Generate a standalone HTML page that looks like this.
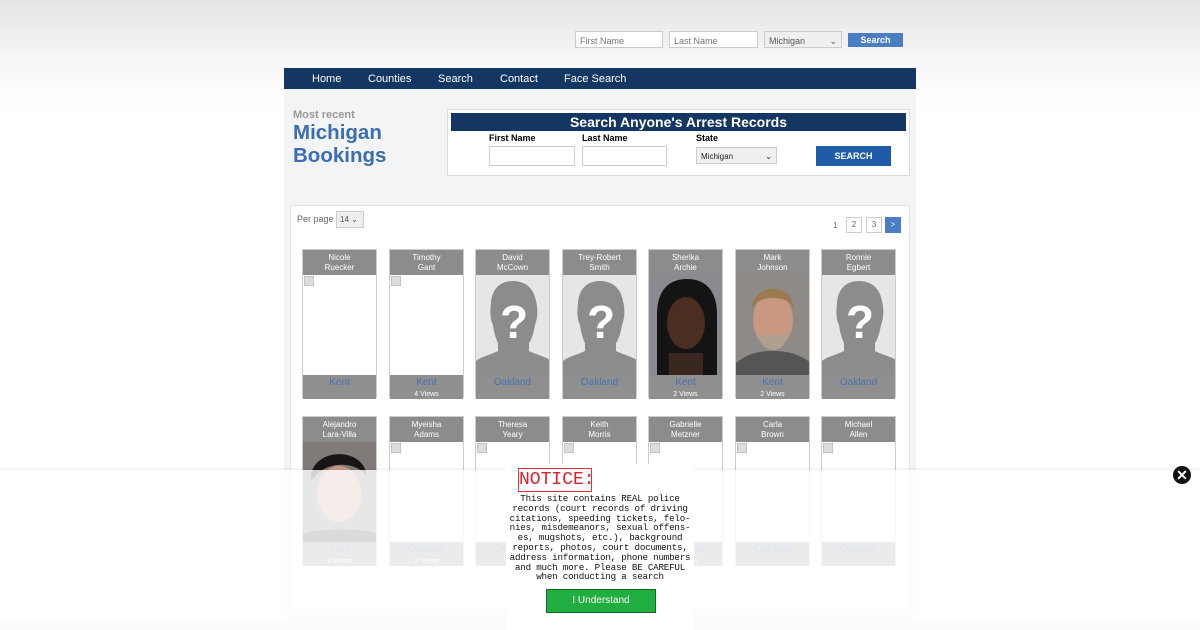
<!DOCTYPE html>
<html><head><meta charset="utf-8">
<style>
*{box-sizing:border-box;margin:0;padding:0}
body{width:1200px;height:620px;overflow:hidden;font-family:"Liberation Sans",sans-serif;background:linear-gradient(#e4e4e4 0,#f7f7f7 60px,#fff 110px);position:relative}
.abs{position:absolute}
.inp{position:absolute;border:1px solid #ccc;background:#fff;font-size:9px;color:#777;padding:4px}
.nav{left:284px;top:68px;width:632px;height:21px;background:#133762;color:#fff;font-size:11px}
.nav span{position:absolute;top:5px}
.main{left:284px;top:89px;width:632px;height:531px;background:#f3f4f6}
.card{position:absolute;width:75px;height:149px;background:#fff;border:1px solid #ccc}
.card .h{height:25px;background:#8c8c8c;color:#fff;font-size:8px;text-align:center;line-height:9.5px;padding-top:3px}
.card .im{height:100px;position:relative;overflow:hidden}
.card .f{height:24px;background:#8f8f8f;text-align:center;color:#4a72b0;font-size:10px;padding-top:2px;line-height:11px}
.card .f small{display:block;color:#fff;font-size:7px;margin-top:1px}
.pg{position:absolute;width:16px;height:16px;border:1px solid #ccc;background:#fff;font-size:8px;color:#666;text-align:center;line-height:14px}
</style></head><body>
<div class="inp" style="left:575px;top:31px;width:88px;height:17px">First Name</div>
<div class="inp" style="left:669px;top:31px;width:89px;height:17px">Last Name</div>
<div class="inp" style="left:764px;top:31px;width:78px;height:17px;background:#efefef;color:#555">Michigan<span style="float:right">⌄</span></div>
<div class="abs" style="left:848px;top:33px;width:55px;height:14px;background:#4a7ec2;color:#fff;font-size:9px;font-weight:bold;text-align:center;line-height:14px">Search</div>

<div class="abs nav"><span style="left:28px">Home</span><span style="left:84px">Counties</span><span style="left:154px">Search</span><span style="left:216px">Contact</span><span style="left:280px">Face Search</span></div>
<div class="abs main"></div>
<div class="abs" style="left:293px;top:109px;font-size:11px;color:#999;font-weight:bold">Most recent</div>
<div class="abs" style="left:293px;top:121px;font-size:20.5px;color:#3b6db3;font-weight:bold;line-height:23px">Michigan<br>Bookings</div>
<div class="abs" style="left:447px;top:109px;width:463px;height:67px;background:#fff;border:1px solid #ddd"></div>
<div class="abs" style="left:451px;top:113px;width:455px;height:18px;background:#133762;color:#fff;font-size:14px;font-weight:bold;text-align:center;line-height:18px">Search Anyone's Arrest Records</div>
<div class="abs" style="left:489px;top:133px;font-size:9px;font-weight:bold">First Name</div>
<div class="abs" style="left:582px;top:133px;font-size:9px;font-weight:bold">Last Name</div>
<div class="abs" style="left:696px;top:133px;font-size:9px;font-weight:bold">State</div>
<div class="inp" style="left:489px;top:146px;width:86px;height:20px"></div>
<div class="inp" style="left:582px;top:146px;width:85px;height:20px"></div>
<div class="inp" style="left:696px;top:147px;width:81px;height:17px;background:#efefef;color:#222;font-size:8px">Michigan<span style="float:right">⌄</span></div>
<div class="abs" style="left:816px;top:146px;width:75px;height:20px;background:#1f5ba6;color:#fff;font-size:9px;font-weight:bold;text-align:center;line-height:20px">SEARCH</div>

<div class="abs" style="left:290px;top:205px;width:620px;height:405px;background:#fff;border:1px solid #e4e4e4"></div>
<div class="abs" style="left:297px;top:214px;font-size:9px;color:#666">Per page</div>
<div class="abs" style="left:336px;top:211px;width:28px;height:17px;background:#eee;border:1px solid #ccc;font-size:8px;color:#555;padding:3px">14 ⌄</div>
<div class="abs" style="left:833px;top:221px;font-size:8px;color:#666">1</div>
<div class="pg" style="left:846px;top:217px">2</div>
<div class="pg" style="left:866px;top:217px">3</div>
<div class="pg" style="left:885px;top:217px;background:#4a7ec2;border-color:#4a7ec2;color:#fff">&gt;</div>
<div class="abs" style="left:290px;top:616px;width:620px;height:10px;background:#e6e6e6"></div>

<div id="cards"></div>
<script>
var sil='<svg width="75" height="100" viewBox="0 0 75 100"><rect width="75" height="100" fill="#e6e6e6"/><path d="M37 6C24 6 16 14 15 28C14 36 14 44 17 50C18 58 20 64 22 68L22 76C14 80 4 82 0 86V100H75V86C71 82 61 80 53 76L53 68C56 64 58 56 59 50C62 42 62 34 60 26C58 14 50 6 37 6Z" fill="#8c8c8c"/><text x="38" y="63" font-size="46" font-weight="bold" fill="#fff" text-anchor="middle" font-family="Liberation Sans">?</text></svg>';
var f1='<svg width="75" height="100"><rect width="75" height="100" fill="#8a8a90"/><path d="M8 100V40C8 10 25 4 38 4s30 6 30 36v60z" fill="#141414"/><ellipse cx="37" cy="48" rx="19" ry="26" fill="#4a2e22"/><rect x="20" y="78" width="34" height="22" fill="#3a2820"/></svg>';
var f2='<svg width="75" height="100"><rect width="75" height="100" fill="#8d8a87"/><ellipse cx="37" cy="45" rx="20" ry="28" fill="#c89880"/><path d="M16 34C16 8 56 6 58 34C54 20 22 18 16 34z" fill="#9a7a4e"/><path d="M22 60c4 20 26 20 30 0z" fill="#b0a090"/><path d="M0 100V88c10-8 20-12 37-12s27 4 38 12v12z" fill="#555"/></svg>';
var f3='<svg width="75" height="100"><rect width="75" height="100" fill="#807a78"/><ellipse cx="36" cy="52" rx="22" ry="28" fill="#c89a84"/><path d="M8 40C4 6 60 2 64 34C54 20 22 16 8 40z" fill="#1a1414"/><path d="M0 100V92c14-6 60-6 75 0v8z" fill="#333"/></svg>';
var blank='<svg width="10" height="10" style="position:absolute;left:1px;top:1px"><rect width="10" height="10" fill="#ddd" stroke="#aaa"/></svg>';
var r1=[["Nicole<br>Ruecker",blank,"Kent",""],["Timothy<br>Gant",blank,"Kent","4 Views"],["David<br>McCown",sil,"Oakland",""],["Trey-Robert<br>Smith",sil,"Oakland",""],["Sherika<br>Archie",f1,"Kent","2 Views"],["Mark<br>Johnson",f2,"Kent","2 Views"],["Ronnie<br>Egbert",sil,"Oakland",""]];
var r2=[["Alejandro<br>Lara-Villa",f3,"Kent","6 Views"],["Myeisha<br>Adams",blank,"Oakland","2 Views"],["Theresa<br>Yeary",blank,"Oakland",""],["Keith<br>Morris",blank,"Oakland",""],["Gabrielle<br>Metzner",blank,"Oakland","2 Views"],["Carla<br>Brown",blank,"Oakland",""],["Michael<br>Allen",blank,"Oakland",""]];
var xs=[302,389,475,562,648,735,821],h='';
[[r1,249],[r2,416]].forEach(function(r){r[0].forEach(function(c,i){h+='<div class="card" style="left:'+xs[i]+'px;top:'+r[1]+'px"><div class="h">'+c[0]+'</div><div class="im">'+c[1]+'</div><div class="f">'+c[2]+(c[3]?'<small>'+c[3]+'</small>':'')+'</div></div>';});});
document.getElementById('cards').innerHTML=h;
</script>

<div class="abs" style="left:0;top:470px;width:1200px;height:160px;background:rgba(255,255,255,0.82);box-shadow:0 -1px 2px rgba(0,0,0,0.08)"></div>
<div class="abs" style="left:506px;top:464px;width:188px;height:166px;background:#fff"></div>
<div class="abs" style="left:518px;top:468px;width:74px;height:24px;border:1px solid #d33;color:#e0202a;font-family:'Liberation Mono',monospace;font-size:18px;line-height:22px;text-align:center">NOTICE:</div>
<div class="abs" style="left:508px;top:494px;width:184px;font-family:'Liberation Mono',monospace;font-size:9.2px;line-height:9.8px;text-align:center;color:#111;letter-spacing:-0.2px">This site contains REAL police records (court records of driving citations, speeding tickets, felo-nies, misdemeanors, sexual offens-es, mugshots, etc.), background reports, photos, court documents, address information, phone numbers and much more. Please BE CAREFUL when conducting a search</div>
<div class="abs" style="left:546px;top:589px;width:110px;height:24px;background:#1fae3f;border:1px solid #116b25;color:#fff;font-size:10px;text-align:center;line-height:22px">I Understand</div>
<div class="abs" style="left:1173px;top:466px;width:18px;height:18px;border-radius:50%;background:#111;color:#fff;font-size:14px;font-weight:bold;text-align:center;line-height:18px">✕</div>
</body></html>
